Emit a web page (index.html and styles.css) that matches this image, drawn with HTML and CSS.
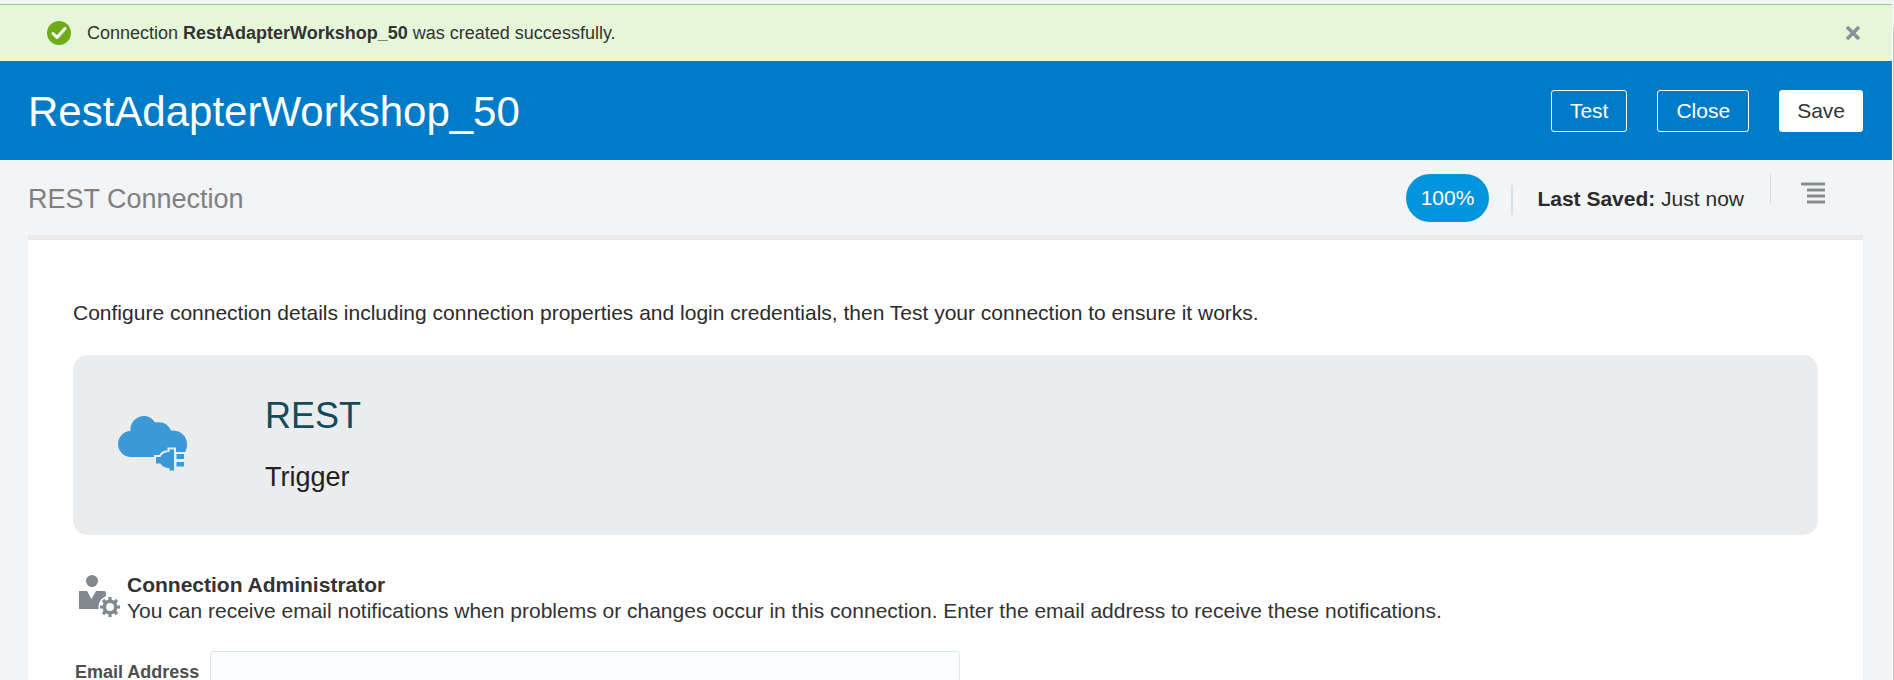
FILE: index.html
```html
<!DOCTYPE html>
<html lang="en">
<head>
<meta charset="utf-8">
<meta name="viewport" content="width=device-width, initial-scale=1">
<title>RestAdapterWorkshop_50</title>
<link rel="stylesheet" href="styles.css">
</head>
<body>
<div class="shell">
  <div class="app">
    <div class="message" role="status">
      <svg class="message-icon" viewBox="0 0 24 24" aria-hidden="true">
        <ellipse cx="12" cy="12" rx="12" ry="12" fill="#70ac1a"/>
        <path d="M6 12.5l4 4 8-9" fill="none" stroke="#fff" stroke-width="3" stroke-linecap="round" stroke-linejoin="round"/>
      </svg>
      <p class="message-text">Connection <strong>RestAdapterWorkshop_50</strong> was created successfully.</p>
      <button class="dismiss" type="button" aria-label="Dismiss">
        <svg viewBox="0 0 16 16" aria-hidden="true"><path d="M2 2l12 12M14 2L2 14" stroke="#8a9196" stroke-width="3.6"/></svg>
      </button>
    </div>

    <header class="header">
      <h1 class="title">RestAdapterWorkshop_50</h1>
      <div class="actions">
        <button class="btn" type="button">Test</button>
        <button class="btn" type="button">Close</button>
        <button class="btn btn-primary" type="button">Save</button>
      </div>
    </header>

    <div class="subheader">
      <h2 class="subtitle">REST Connection</h2>
      <div class="status">
        <span class="progress">100%</span>
        <p class="saved"><strong>Last Saved:</strong> Just now</p>
        <div class="menu">
          <button class="menu-button" type="button" aria-label="Menu">
            <svg viewBox="0 0 24 22" aria-hidden="true" shape-rendering="crispEdges">
              <path fill="#bcc3c7" d="M0 0h24v4H0zM6 6h18v4H6zM6 12h18v4H6zM6 18h18v4H6z"/>
              <path fill="#868b8f" d="M0 1h24v2H0zM6 7h18v2H6zM6 13h18v2H6zM6 19h18v2H6z"/>
            </svg>
          </button>
        </div>
      </div>
    </div>

    <main class="panel">
      <p class="intro">Configure connection details including connection properties and login credentials, then Test your connection to ensure it works.</p>

      <section class="adapter">
        <svg class="adapter-icon" viewBox="0 0 70 56" aria-hidden="true">
          <path fill="#3b99d8" d="M13 41A13 13 0 0 1 0 28A13 13 0 0 1 12.500 15A13.500 13.500 0 0 1 26 0C31 0 34.500 2.500 37 6.500C45 5 50.500 8.500 53 14.500C62.500 14 69 20 69 28C69 31 68.500 33.500 67 36L36 41z"/>
          <g fill="#3b99d8" stroke="#ebecee" stroke-width="4" paint-order="stroke">
            <path d="M38 41h4.500c1-2.500 3.500-5 9-5V33.500h4.500v21h-4.500V52c-5.500 0-8-2.500-9-4.500H38z"/>
            <path d="M58.500 38h7.500v5h-7.500zM58.500 46h7.500v4.500h-7.500z"/>
          </g>
        </svg>
        <div class="adapter-info">
          <h3 class="adapter-name">REST</h3>
          <p class="adapter-role">Trigger</p>
        </div>
      </section>

      <section class="admin">
        <svg class="admin-icon" viewBox="0 0 42 44" aria-hidden="true">
          <g fill="#808890">
            <circle cx="13" cy="6" r="6"/>
            <path d="M0 16h8l4.500 8 4.500-8h9l1 2v16H0z"/>
          </g>
          <circle cx="31" cy="32" r="11.500" fill="#fff"/>
          <circle cx="31" cy="32" r="5.700" fill="none" stroke="#808890" stroke-width="3.600"/>
          <path stroke="#808890" stroke-width="3.200" d="M31 26v-4M31 38v4M25 32h-4M37 32h4M26.800 27.800l-2.800-2.800M35.200 36.200l2.800 2.800M26.800 36.200l-2.800 2.800M35.200 27.800l2.800-2.800"/>
        </svg>
        <div class="admin-info">
          <h3 class="admin-title">Connection Administrator</h3>
          <p>You can receive email notifications when problems or changes occur in this connection. Enter the email address to receive these notifications.</p>
        </div>
      </section>

      <form class="field">
        <label class="field-label" for="email">Email Address</label>
        <input class="field-input" id="email" name="email" type="email">
      </form>
    </main>
  </div>
  <div class="rail"></div>
</div>
</body>
</html>
```
FILE: styles.css
```css
* {
  box-sizing: border-box;
}

html {
  height: 100%;
  overflow: hidden;
}

body {
  height: 100%;
  margin: 0;
  overflow: hidden;
  background: #f2f4f6;
  color: #2b2b2b;
  font-family: "Liberation Sans", Arial, sans-serif;
  font-size: 21px;
  line-height: 26px;
}

h1, h2, h3, p {
  margin: 0;
  font-weight: 400;
}

button, input {
  font: inherit;
}

.shell {
  display: flex;
  min-height: 100%;
  padding-top: 4px;
}

.app {
  flex: 1;
  display: flex;
  flex-direction: column;
}

.rail {
  width: 2px;
  margin-top: 23px;
  border-left: 1px solid #fff;
  background: #c4c4c4;
}

.message {
  display: flex;
  align-items: center;
  padding: 15px 31px 15px 47px;
  border-top: 1px solid #9ccb93;
  background: #e5f7d8;
  color: #333;
  font-size: 18px;
}

.message-icon {
  width: 24px;
  height: 24px;
  margin-right: 16px;
}

.message-text {
  flex: 1;
}

.dismiss, .menu-button {
  display: flex;
  padding: 0;
  border: 0;
  background: none;
}

.dismiss svg {
  width: 16px;
  height: 16px;
}

.header {
  display: flex;
  align-items: center;
  justify-content: space-between;
  height: 99px;
  padding: 0 29px 0 28px;
  background: #007bc8;
  color: #fff;
}

.title {
  padding-top: 2px;
  font-size: 42px;
  line-height: 50px;
}

.actions {
  display: flex;
  gap: 30px;
}

.btn {
  padding: 7px 18px;
  border: 1px solid #fff;
  border-radius: 3px;
  background: transparent;
  color: #fff;
}

.btn-primary {
  padding: 7px 17px;
  background: #fff;
  color: #333;
}

.subheader {
  display: flex;
  align-items: center;
  justify-content: space-between;
  height: 75px;
  padding: 0 67px 0 28px;
}

.subtitle {
  padding-top: 2px;
  color: #808080;
  font-size: 27px;
  line-height: 32px;
}

.status {
  display: flex;
  align-items: center;
}

.progress {
  padding: 11px 15px;
  border-radius: 24px;
  background: #0095de;
  color: #fff;
}

.saved {
  margin-top: 4px;
  margin-left: 22px;
  padding: 1px 26px 3px 24px;
  border-left: 2px solid #d3dfe8;
}

.menu {
  display: flex;
  align-items: flex-end;
  align-self: flex-start;
  height: 30px;
  padding-left: 30px;
  border-left: 1px solid #d3dfe8;
}

.menu-button svg {
  width: 24px;
  height: 22px;
}

.panel {
  flex: 1;
  margin: 0 29px 0 28px;
  padding: 60px 45px 0;
  border-top: 5px solid #ebebeb;
  background: #fff;
}

.adapter {
  display: flex;
  margin-top: 29px;
  padding: 37px 45px 36px;
  min-height: 180px;
  border-radius: 15px;
  background: #ebecee;
}

.adapter-icon {
  width: 70px;
  height: 56px;
  margin-top: 24px;
  margin-right: 77px;
}

.adapter-name {
  color: #124b59;
  font-size: 36px;
  line-height: 48px;
}

.adapter-role {
  margin-top: 20px;
  color: #222;
  font-size: 27px;
  line-height: 34px;
}

.admin {
  display: flex;
  margin-top: 37px;
  padding-left: 6px;
  color: #333;
}

.admin-icon {
  width: 42px;
  height: 44px;
  margin-top: 3px;
  margin-right: 6px;
}

.admin-title {
  font-size: 21px;
  font-weight: 700;
}

.field {
  display: flex;
  align-items: center;
  margin-top: 27px;
}

.field-label {
  width: 137px;
  padding-left: 2px;
  color: #4f4f4f;
  font-size: 18px;
  font-weight: 700;
}

.field-input {
  width: 750px;
  height: 42px;
  padding: 0 10px;
  border: 1px solid #dfe4e7;
  border-radius: 3px;
  background: #fcfdfe;
}
```
